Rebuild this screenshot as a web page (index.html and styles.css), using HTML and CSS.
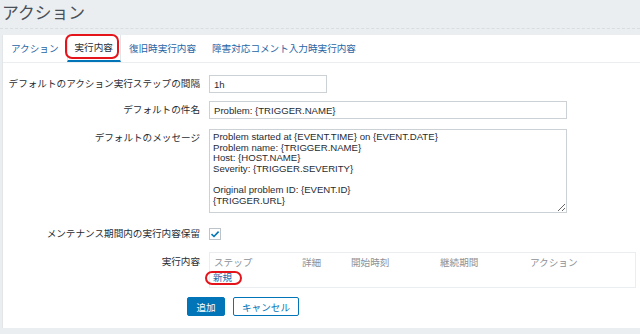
FILE: index.html
```html
<!DOCTYPE html>
<html>

<head>
    <title>アクション</title>
    <link rel="stylesheet" href="styles.css">
</head>

<body>
    <div class="header">
        <h1>アクション</h1>
    </div>

    <div class="panel">
        <ul class="tabs">
            <li class="tab"><a href="#">アクション</a></li>
            <li class="tab active"><a href="#">実行内容</a><span class="mark"></span></li>
            <li class="tab"><a href="#">復旧時実行内容</a></li>
            <li class="tab"><a href="#">障害対応コメント入力時実行内容</a></li>
        </ul>

        <div class="form">
            <div class="row row-input">
                <label class="label">デフォルトのアクション実行ステップの間隔</label>
                <input class="field field-short" type="text" value="1h">
            </div>
            <div class="row row-input row-subject">
                <label class="label">デフォルトの件名</label>
                <input class="field field-wide" type="text" value="Problem: {TRIGGER.NAME}">
            </div>
            <div class="row row-text">
                <label class="label">デフォルトのメッセージ</label>
                <textarea class="field field-area">Problem started at {EVENT.TIME} on {EVENT.DATE}
Problem name: {TRIGGER.NAME}
Host: {HOST.NAME}
Severity: {TRIGGER.SEVERITY}

Original problem ID: {EVENT.ID}
{TRIGGER.URL}</textarea>
            </div>
            <div class="row row-check">
                <label class="label">メンテナンス期間内の実行内容保留</label>
                <span class="checkbox">
                    <svg width="10" height="10" viewBox="0 0 10 10">
                        <path d="M1.5 5.2 L4 7.5 L8.6 2.6" fill="none" stroke="#0275b8" stroke-width="1.6" />
                    </svg>
                </span>
            </div>
            <div class="row row-ops">
                <label class="label">実行内容</label>
                <div class="ops">
                    <div class="ops-head">
                        <span class="col col-step">ステップ</span>
                        <span class="col col-detail">詳細</span>
                        <span class="col col-start">開始時刻</span>
                        <span class="col col-dur">継続期間</span>
                        <span class="col col-act">アクション</span>
                    </div>
                    <div class="ops-new">
                        <a href="#" class="new-link">新規<span class="mark mark-new"></span></a>
                    </div>
                </div>
            </div>
            <div class="buttons">
                <button class="btn btn-main">追加</button>
                <button class="btn btn-alt">キャンセル</button>
            </div>
        </div>
    </div>
</body>

</html>
```

FILE: styles.css
```css
body {
    margin: 0;
    background-color: #ebeef0;
    font-family: "Liberation Sans", "Noto Sans CJK JP", sans-serif;
    font-size: 9.6px;
    color: #1f2c33;
}

.header {
    height: 28px;
    border-bottom: 1px dashed #d9dde1;
    padding-left: 2px;
}

h1 {
    margin: 0;
    padding-top: 4px;
    font-size: 16.8px;
    line-height: 20px;
    font-weight: normal;
    color: #4a5057;
}

.panel {
    margin: 6px 0 0 2px;
    height: 293px;
    background-color: white;
    border-left: 1px solid #e3e6e8;
}

.tabs {
    display: flex;
    margin: 0;
    padding: 0;
    list-style: none;
    border-bottom: 1px solid #ebeef0;
    height: 27px;
}

.tab {
    position: relative;
    padding: 0 8px;
    line-height: 27px;
}

.tab a {
    color: #1f65a6;
    text-decoration: none;
}

.tab.active {
    border-left: 1px solid #e1e5e8;
    border-right: 1px solid #e1e5e8;
    border-bottom: 2px solid #0275b8;
    padding: 0 7px;
    line-height: 25px;
}

.tab.active a {
    color: #1f2c33;
}

.mark {
    position: absolute;
    left: -3px;
    right: 1px;
    top: -1px;
    bottom: 1px;
    border: 2px solid #e5141b;
    border-radius: 7px;
}

.form {
    padding-top: 12px;
}

.row {
    display: flex;
    align-items: flex-start;
}

.label {
    width: 197px;
    padding-right: 9px;
    text-align: right;
    line-height: 18px;
    flex-shrink: 0;
}

.row-input {
    margin-bottom: 8px;
}

.row-subject {
    margin-bottom: 10px;
}

.row-text {
    margin-bottom: 15px;
}

.row-check {
    margin-bottom: 12px;
}

.row-check .label {
    line-height: 12px;
}

.row-ops {
    margin-bottom: 9px;
}

.row-ops .label {
    line-height: 20px;
}

.field {
    box-sizing: border-box;
    margin: 0;
    border: 1px solid #cbd1d5;
    background-color: white;
    font-family: "Liberation Sans", "Noto Sans CJK JP", sans-serif;
    font-size: 9.6px;
    color: #1f2c33;
    outline: none;
}

input.field {
    height: 18px;
    padding: 0 4px;
}

.field-short {
    width: 118px;
}

.field-wide {
    width: 358px;
}

.field-area {
    width: 358px;
    height: 84px;
    padding: 2px 3px;
    line-height: 10.6px;
    resize: vertical;
    overflow: hidden;
}

.checkbox {
    box-sizing: border-box;
    width: 12px;
    height: 12px;
    border: 1px solid #bcc4ca;
    display: flex;
    align-items: center;
    justify-content: center;
}

.ops {
    box-sizing: border-box;
    width: 427px;
    height: 36px;
    border: 1px solid #ebeef0;
}

.ops-head {
    display: flex;
    height: 18px;
    line-height: 20px;
    color: #8d9196;
}

.col-step {
    padding-left: 4px;
    width: 88px;
}

.col-detail {
    width: 49px;
}

.col-start {
    width: 89px;
}

.col-dur {
    width: 90px;
}

.ops-new {
    padding-left: 3px;
    line-height: 14px;
}

.new-link {
    position: relative;
    color: #1f65a6;
    text-decoration: none;
}

.mark-new {
    left: -8px;
    right: -10px;
    top: -1px;
    bottom: -2px;
    border-radius: 8px;
}

.buttons {
    display: flex;
    gap: 8px;
    padding-left: 184px;
}

.btn {
    box-sizing: border-box;
    height: 19px;
    padding: 0;
    font-family: "Liberation Sans", "Noto Sans CJK JP", sans-serif;
    font-size: 9.6px;
    border: 1px solid #0275b8;
    border-radius: 2px;
}

.btn-main {
    width: 38px;
    background-color: #0275b8;
    color: white;
}

.btn-alt {
    width: 66px;
    background-color: white;
    color: #0275b8;
}
```
